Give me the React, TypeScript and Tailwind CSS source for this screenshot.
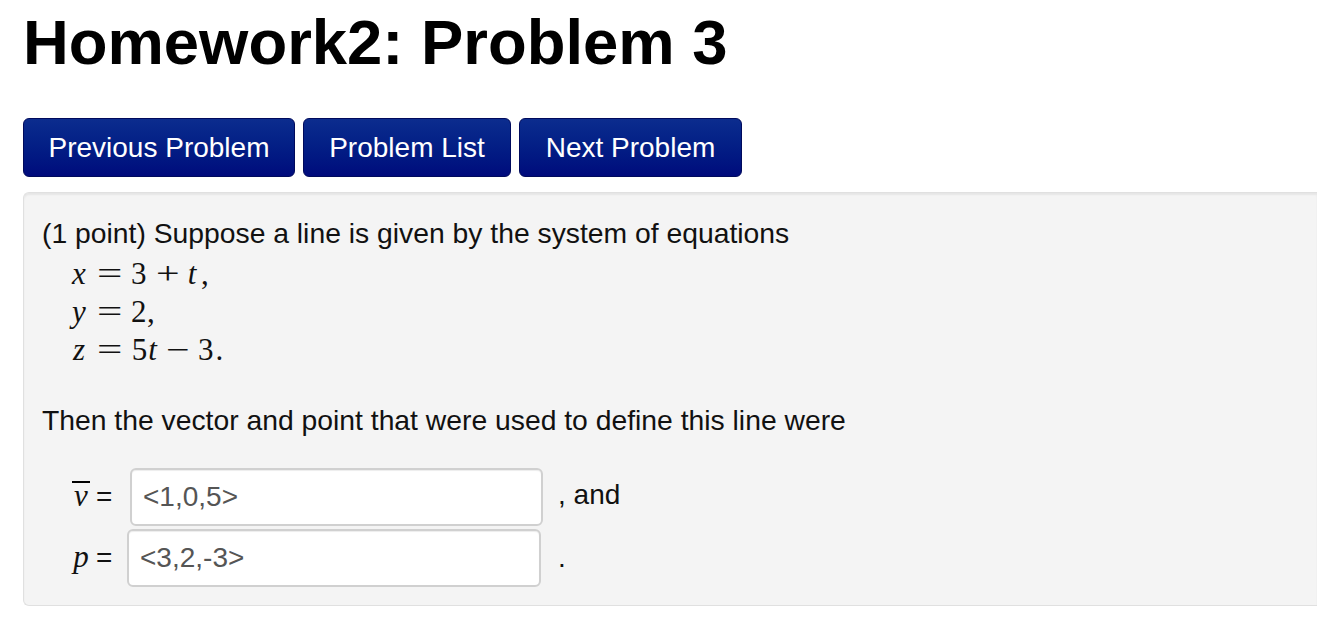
import React from "react";

const navButtons = [
  { label: "Previous Problem", width: "w-[272px]" },
  { label: "Problem List", width: "w-[208px]" },
  { label: "Next Problem", width: "w-[223px]" },
];

const App = () => {
  return (
    <div className="min-h-screen bg-white pl-[23px] font-['Liberation_Sans',Arial,sans-serif] text-[#111]">
      {/* Page title */}
      <h1 className="pt-[7px] text-[63.4px] font-bold leading-[70px] text-black">
        Homework2: Problem 3
      </h1>

      {/* Navigation */}
      <div className="mt-[41px] flex gap-[8px]">
        {navButtons.map((btn) => (
          <button
            key={btn.label}
            type="button"
            className={`${btn.width} h-[59px] rounded-[6px] border border-[#000a5c] bg-gradient-to-b from-[#0c2c8e] to-[#000a7c] text-[28px] text-white`}
          >
            {btn.label}
          </button>
        ))}
      </div>

      {/* Problem body */}
      <div className="mt-[15px] rounded-l-[6px] border border-r-0 border-[#e0e0e0] bg-[#f4f4f4] pl-[18px] pt-[20px] pb-[17px] shadow-[inset_0_2px_2px_rgba(0,0,0,0.06)]">
        <p className="text-[28.3px] leading-[40px]">
          (1 point) Suppose a line is given by the system of equations
        </p>

        <div className="mt-[2px] pl-[28px] font-['Liberation_Serif',serif] text-[31px] leading-[38px]">
          <div className="h-[38px] whitespace-nowrap">
            <span className="inline-block w-[18px] text-center italic">x</span>
            <span className="inline-block w-[43px] text-center">
              <span className="inline-block scale-x-[1.45]">=</span>
            </span>
            <span className="inline-block w-[16px]">3</span>
            <span className="inline-block w-[36px] pl-[6px] text-center">
              <span className="inline-block scale-x-[1.35]">+</span>
            </span>
            <span className="inline-block w-[18px] text-center italic">t</span>
            <span>,</span>
          </div>
          <div className="h-[38px] whitespace-nowrap">
            <span className="inline-block w-[18px] text-center italic">y</span>
            <span className="inline-block w-[43px] text-center">
              <span className="inline-block scale-x-[1.45]">=</span>
            </span>
            <span className="inline-block w-[16px]">2</span>
            <span>,</span>
          </div>
          <div className="h-[38px] whitespace-nowrap">
            <span className="inline-block w-[18px] text-center italic">z</span>
            <span className="inline-block w-[43px] text-center">
              <span className="inline-block scale-x-[1.45]">=</span>
            </span>
            <span className="inline-block w-[17px] text-center">5</span>
            <span className="inline-block w-[9px] text-center italic">t</span>
            <span className="inline-block w-[41px] text-center">
              <span className="inline-block scale-x-[1.35]">−</span>
            </span>
            <span>3</span>
            <span className="ml-[2px]">.</span>
          </div>
        </div>

        <p className="mt-[31px] text-[28.3px] leading-[40px]">
          Then the vector and point that were used to define this line were
        </p>

        <div className="mt-[26px] text-[28px]">
          <div className="flex h-[61px] items-center pl-[28px]">
            <span className="inline-block w-[22px] text-center font-['Liberation_Serif',serif] text-[31px] italic">
              <span className="inline-block w-[18px] border-t-[2px] border-black leading-[25px]">v</span>
            </span>
            <span className="ml-[4px] w-[34px]">=</span>
            <input
              type="text"
              defaultValue="<1,0,5>"
              className="h-[58px] w-[413px] rounded-[6px] border-2 border-[#d0d0d0] bg-white px-[11px] text-[28px] text-[#555] shadow-[inset_0_1px_1px_rgba(0,0,0,0.075)] outline-none"
            />
            <span className="ml-[15px] -mt-[4px]">, and</span>
          </div>
          <div className="flex h-[61px] items-center pl-[28px]">
            <span className="inline-block w-[22px] text-center font-['Liberation_Serif',serif] text-[31px] italic">
              p
            </span>
            <span className="ml-[4px] w-[31px]">=</span>
            <input
              type="text"
              defaultValue="<3,2,-3>"
              className="h-[58px] w-[414px] rounded-[6px] border-2 border-[#d0d0d0] bg-white px-[11px] text-[28px] text-[#555] shadow-[inset_0_1px_1px_rgba(0,0,0,0.075)] outline-none"
            />
            <span className="ml-[17px]">.</span>
          </div>
        </div>
      </div>
    </div>
  );
};

export default App;
